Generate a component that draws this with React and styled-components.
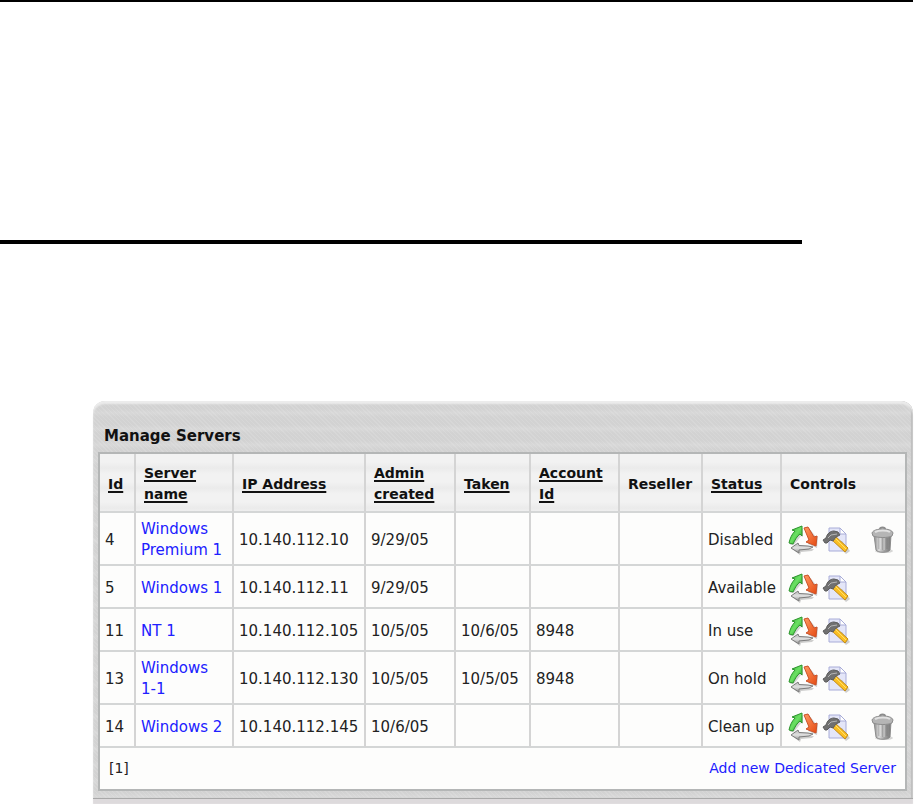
import React from 'react'
import styled, { createGlobalStyle } from 'styled-components'

const columns = [
  { label: 'Id', width: 36, sortable: true },
  { label: 'Server name', width: 98, sortable: true },
  { label: 'IP Address', width: 132, sortable: true },
  { label: 'Admin created', width: 90, sortable: true },
  { label: 'Taken', width: 75, sortable: true },
  { label: 'Account Id', width: 89, sortable: true },
  { label: 'Reseller', width: 83 },
  { label: 'Status', width: 79, sortable: true },
  { label: 'Controls' },
]

const servers = [
  { id: 4, name: 'Windows Premium 1', ip: '10.140.112.10', created: '9/29/05', status: 'Disabled', removable: true, tall: true },
  { id: 5, name: 'Windows 1', ip: '10.140.112.11', created: '9/29/05', status: 'Available' },
  { id: 11, name: 'NT 1', ip: '10.140.112.105', created: '10/5/05', taken: '10/6/05', account: '8948', status: 'In use' },
  { id: 13, name: 'Windows 1-1', ip: '10.140.112.130', created: '10/5/05', taken: '10/5/05', account: '8948', status: 'On hold', tall: true },
  { id: 14, name: 'Windows 2', ip: '10.140.112.145', created: '10/6/05', status: 'Clean up', removable: true },
]

function CycleIcon() {
  return (
    <svg width="30" height="30" viewBox="0 0 30 30" aria-hidden="true">
      <defs>
        <linearGradient id="cycleGreen" x1="0" y1="0" x2="1" y2="1">
          <stop offset="0" stopColor="#35b035" />
          <stop offset="0.5" stopColor="#6be063" />
          <stop offset="1" stopColor="#1f9c1f" />
        </linearGradient>
        <linearGradient id="cycleRed" x1="0" y1="0" x2="1" y2="1">
          <stop offset="0" stopColor="#ff9a62" />
          <stop offset="1" stopColor="#e54a12" />
        </linearGradient>
        <linearGradient id="cycleGrey" x1="0" y1="0" x2="0" y2="1">
          <stop offset="0" stopColor="#b8b8b8" />
          <stop offset="0.5" stopColor="#e0e0e0" />
          <stop offset="1" stopColor="#909090" />
        </linearGradient>
      </defs>
      <path d="M2 20 L6 20 L13 11 L15 12 L15 3 L8 10 Z" fill="#777" opacity="0.3" />
      <path d="M1 18 C2 13 4 9 7 6 L4 5 L14 1 L14 11 L12 9 C9 11 7 15 5 19 Z" fill="url(#cycleGreen)" stroke="#2c932c" strokeLinejoin="round" />
      <path d="M21 3 L28 12 L30 11 L29 23 L20 19 Z" fill="#777" opacity="0.35" />
      <path d="M16 3 L20 2 L26 12 L29 11 L28 21 L18 17 L21 15 Z" fill="url(#cycleRed)" stroke="#cc5228" strokeLinejoin="round" />
      <path d="M4 24 L12 30 L13 27 L24 26 L26 24 L12 24 Z" fill="#888" opacity="0.4" />
      <path d="M3 23 L10 18 L11 20.5 L20 21 L25 22 L21 24 L11 25 L11 28 Z" fill="url(#cycleGrey)" stroke="#7c7c7c" strokeLinejoin="round" />
    </svg>
  )
}

function HammerIcon() {
  return (
    <svg width="28" height="28" viewBox="0 0 28 28" aria-hidden="true">
      <path d="M7 2 H18 L24 8 V25 H7 Z" fill="#e4e6f8" stroke="#a8acd8" />
      <path d="M18 2 V8 H24 Z" fill="#fff" stroke="#a8acd8" />
      <path d="M12 15 L24 28 L28 25 L20 15 Z" fill="#777" opacity="0.35" />
      <path d="M10 14 L13 10 L26 22 L23 26 Z" fill="#fbbf22" stroke="#c28c1c" strokeWidth="1" />
      <path d="M13 12 L24 23" stroke="#ffe06b" strokeWidth="1" />
      <path d="M1 14 L4 12 C5 8 8 5 12 5 L16 6 L18 9 L14 11 L11 15 L8 14 L5 17 L3 17 Z" fill="#707070" stroke="#5c5c5c" strokeLinejoin="round" />
      <path d="M6 12 L9 9 L15 8" stroke="#b5b5b5" fill="none" />
    </svg>
  )
}

function TrashIcon() {
  return (
    <svg width="26" height="28" viewBox="0 0 26 28" aria-hidden="true">
      <defs>
        <linearGradient id="trashBody">
          <stop offset="0" stopColor="#8a8a8a" />
          <stop offset="0.3" stopColor="#dcdcdc" />
          <stop offset="0.6" stopColor="#a4a4a4" />
          <stop offset="1" stopColor="#777" />
        </linearGradient>
      </defs>
      <ellipse cx="14" cy="25" rx="9" ry="2" fill="#999" opacity="0.4" />
      <path d="M4 9 H21 L20 24 C18 27 8 27 6 24 Z" fill="url(#trashBody)" stroke="#8c8c8c" />
      <path d="M9 12 V23 M13 12 V24 M17 12 V23" stroke="#777" opacity="0.6" />
      <path d="M10 12 V23 M14 12 V24" stroke="#eee" opacity="0.7" />
      <path d="M10 3 C10 1 15 1 15 3" stroke="#8c8c8c" strokeWidth="2" fill="none" />
      <path d="M2 7 C3 4 8 3 13 3 C18 3 22 4 23 7 L22 10 C18 12 8 12 3 10 Z" fill="#b5b5b5" stroke="#8c8c8c" />
      <path d="M5 6 C9 4 17 4 20 6" stroke="#e2e2e2" strokeWidth="2" fill="none" />
    </svg>
  )
}

function App() {
  return (
    <Page>
      <GlobalStyle />
      <TopRule />
      <SectionRule />
      <Panel>
        <Title>Manage Servers</Title>
        <Table>
          <colgroup>
            {columns.map((column) => (
              <Column key={column.label} $width={column.width} />
            ))}
          </colgroup>
          <thead>
            <tr>
              {columns.map((column) => (
                <HeadCell key={column.label} scope="col">
                  {column.sortable ? <SortLink href="#">{column.label}</SortLink> : column.label}
                </HeadCell>
              ))}
            </tr>
          </thead>
          <tbody>
            {servers.map((server) => (
              <Row key={server.id} $tall={server.tall}>
                <Cell>{server.id}</Cell>
                <Cell><Link href="#">{server.name}</Link></Cell>
                <Cell>{server.ip}</Cell>
                <Cell>{server.created}</Cell>
                <Cell>{server.taken}</Cell>
                <Cell>{server.account}</Cell>
                <Cell />
                <Cell>{server.status}</Cell>
                <Cell>
                  <Controls>
                    <IconButton aria-label="Change state"><CycleIcon /></IconButton>
                    <IconButton aria-label="Edit server"><HammerIcon /></IconButton>
                    {server.removable && (
                      <DeleteButton aria-label="Delete server"><TrashIcon /></DeleteButton>
                    )}
                  </Controls>
                </Cell>
              </Row>
            ))}
          </tbody>
          <tfoot>
            <tr>
              <FootCell colSpan={columns.length}>
                <Footer>
                  <span>[1]</span>
                  <Link href="#">Add new Dedicated Server</Link>
                </Footer>
              </FootCell>
            </tr>
          </tfoot>
        </Table>
      </Panel>
    </Page>
  )
}

export default App


const GlobalStyle = createGlobalStyle`
  body {
    margin: 0;
    background: #ffffff;
    color: #222222;
    font-family: "DejaVu Sans", Verdana, sans-serif;
    font-size: 15px;
    line-height: 21px;
  }
`

const Page = styled.main`
  display: flex;
  flex-direction: column;
  padding: 0 2px 5px 0;
`

const TopRule = styled.div`
  height: 2px;
  background: #000000;
`

const SectionRule = styled.div`
  height: 4px;
  margin: 238px 111px 157px 0;
  background: #000000;
`

const Panel = styled.section`
  margin-left: 93px;
  padding: 25px 6px 7px 5px;
  border-bottom: 1px solid #a8a8a8;
  border-radius: 12px 12px 0 0;
  background:
    repeating-linear-gradient(45deg, #ffffff1c 0 1px, #ffffff00 1px 3px),
    repeating-linear-gradient(#d2d2d2 0 8px, #d8d8d8 12px, #d2d2d2 16px);
  box-shadow: inset 0 3px 2px #ececec, inset -2px 0 1px #bcbcbc, 0 5px 1px #dddadc;
`

const Title = styled.h1`
  margin: 0;
  padding: 0 6px 5px;
  font-size: 15px;
  line-height: 21px;
  color: #111111;
`

const Table = styled.table`
  width: 100%;
  table-layout: fixed;
  border-collapse: separate;
  border-spacing: 0;
  border: 2px solid #b4b6b6;
  background: #fdfdfc;
`

const Column = styled.col`
  width: ${props => props.$width ? `${props.$width}px` : 'auto'};
`

const HeadCell = styled.th`
  height: 59px;
  box-sizing: border-box;
  padding: 3px 0 0 8px;
  border-right: 2px solid #d4d4d4;
  border-bottom: 2px solid #d4d6d6;
  background: repeating-linear-gradient(#f2f2f2 0 8px, #ebebeb 14px, #f2f2f2 20px);
  font-size: 14px;
  text-align: left;
  color: #111111;

  &:last-child {
    border-right: 0;
  }
`

const SortLink = styled.a`
  color: inherit;
  text-underline-offset: 2px;
  text-decoration-thickness: 2px;
`

const Row = styled.tr`
  height: ${props => props.$tall ? 53 : 43}px;
`

const Cell = styled.td`
  padding: 3px 5px 0;
  border-right: 2px solid #d4d4d4;
  border-bottom: 2px solid #d4d6d6;

  &:last-child {
    border-right: 0;
  }
`

const Link = styled.a`
  color: #2020ff;
  text-decoration: none;
`

const Controls = styled.div`
  display: flex;
  align-items: center;
  gap: 4px;
  padding-left: 1px;
`

const IconButton = styled.button`
  display: flex;
  padding: 0;
  border: 0;
  background: none;
  cursor: pointer;
`

const DeleteButton = styled(IconButton)`
  margin-left: 16px;
`

const FootCell = styled.td`
  height: 41px;
  padding: 0 9px;
  font-size: 14px;
`

const Footer = styled.div`
  display: flex;
  justify-content: space-between;
  align-items: center;
`
